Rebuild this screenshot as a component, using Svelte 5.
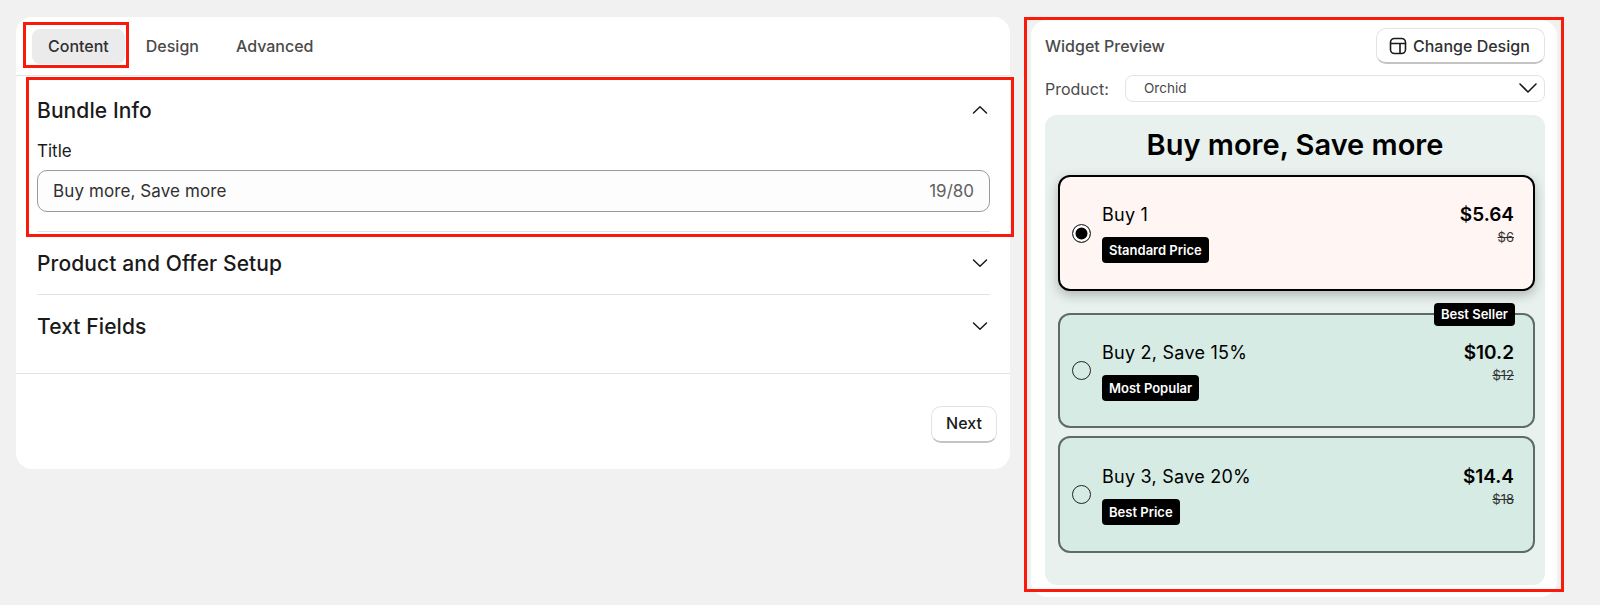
<script>
	const tabs = ["Content", "Design", "Advanced"];
	const offers = [
		{ title: "Buy 1", tag: "Standard Price", price: "$5.64", was: "$6", selected: true },
		{ title: "Buy 2, Save 15%", tag: "Most Popular", price: "$10.2", was: "$12", ribbon: "Best Seller" },
		{ title: "Buy 3, Save 20%", tag: "Best Price", price: "$14.4", was: "$18" },
	];
</script>

{#snippet chevron(up)}
	<svg class="chevron" class:up width="16" height="16" viewBox="0 0 16 16" fill="none">
		<path d="M1.5 5 8 11.2 14.5 5" stroke="#1a1a1a" stroke-width="1.5" stroke-linecap="round" stroke-linejoin="round" />
	</svg>
{/snippet}

<div class="page">
	<section class="editor">
		<nav class="tabs">
			{#each tabs as tab, i}
				<button class="tab" class:active={i === 0}>{tab}</button>
			{/each}
		</nav>
		<div class="accordion">
			<div class="group open">
				<div class="group-head">
					<h2>Bundle Info</h2>
					{@render chevron(true)}
				</div>
				<label class="field-label" for="title">Title</label>
				<div class="input">
					<input id="title" value="Buy more, Save more" />
					<span class="count">19/80</span>
				</div>
			</div>
			<div class="group">
				<div class="group-head">
					<h2>Product and Offer Setup</h2>
					{@render chevron(false)}
				</div>
			</div>
			<div class="group last">
				<div class="group-head">
					<h2>Text Fields</h2>
					{@render chevron(false)}
				</div>
			</div>
		</div>
		<footer class="actions">
			<button class="next">Next</button>
		</footer>
	</section>

	<aside class="preview">
		<div class="preview-head">
			<span class="heading">Widget Preview</span>
			<button class="change">
				<svg width="18" height="18" viewBox="0 0 18 18" fill="none" stroke="#1a1a1a" stroke-width="1.6">
					<rect x="1.5" y="1.5" width="15" height="15" rx="4" />
					<path d="M1.5 6.5h15M11 6.5v10" />
				</svg>
				Change Design
			</button>
		</div>
		<div class="product-row">
			<span class="product-label">Product:</span>
			<div class="select">
				<span>Orchid</span>
				<svg width="20" height="14" viewBox="0 0 20 14" fill="none">
					<path d="M2 3l8 8 8-8" stroke="#1a1a1a" stroke-width="1.6" stroke-linecap="round" stroke-linejoin="round" />
				</svg>
			</div>
		</div>
		<div class="widget">
			<h1>Buy more, Save more</h1>
			{#each offers as o}
				<div class="offer" class:selected={o.selected}>
					{#if o.ribbon}<span class="ribbon">{o.ribbon}</span>{/if}
					<span class="radio"></span>
					<div class="offer-main">
						<div class="offer-title">{o.title}</div>
						<span class="tag">{o.tag}</span>
					</div>
					<div class="offer-price">
						<div class="price">{o.price}</div>
						<s class="was">{o.was}</s>
					</div>
				</div>
			{/each}
		</div>
	</aside>

	<!-- annotation boxes drawn over the screenshot -->
	<div class="mark mark-tab"></div>
	<div class="mark mark-info"></div>
	<div class="mark mark-preview"></div>
</div>

<style>
	:global(body) {
		background: #f1f1f1;
		overflow: hidden;
	}
	.page {
		position: relative;
		display: flex;
		align-items: flex-start;
		height: 605px;
		box-sizing: border-box;
		padding: 17px 0 0 16px;
		font-family: Inter, "Liberation Sans", sans-serif;
		color: #303030;
	}
	button {
		font-family: inherit;
		cursor: pointer;
	}

	.editor {
		width: 994px;
		height: 452px;
		background: #fff;
		border-radius: 16px;
		display: flex;
		flex-direction: column;
	}
	.tabs {
		display: flex;
		gap: 5px;
		height: 59px;
		box-sizing: border-box;
		padding: 12px 0 0 16px;
		border-bottom: 1px solid #e3e3e3;
	}
	.tab {
		height: 35px;
		padding: 0 16px 2px;
		border: 0;
		border-radius: 8px;
		background: transparent;
		color: #4a4a4a;
		font-size: 16px;
		font-weight: 500;
	}
	.tab.active {
		background: #ebebeb;
		color: #303030;
	}
	.accordion {
		padding: 0 20px 0 21px;
		height: 298px;
		box-sizing: border-box;
		border-bottom: 1px solid #e3e3e3;
	}
	.group {
		border-bottom: 1px solid #e3e3e3;
		height: 63px;
		box-sizing: border-box;
	}
	.group.open {
		height: 156px;
	}
	.group.last {
		border-bottom: 0;
	}
	.group-head {
		display: flex;
		justify-content: space-between;
		align-items: center;
		height: 63px;
	}
	.group.open .group-head {
		height: 69px;
	}
	.chevron {
		margin: 0 2px 2px 0;
	}
	.chevron.up {
		transform: rotate(180deg);
	}
	h2 {
		margin: 0;
		font-size: 21px;
		letter-spacing: 0.1px;
		font-weight: 500;
		color: #1a1a1a;
	}
	.field-label {
		display: block;
		font-size: 17px;
		line-height: 20px;
		color: #1a1a1a;
		margin-top: -4px;
	}
	.input {
		display: flex;
		align-items: center;
		margin-top: 9px;
		height: 42px;
		box-sizing: border-box;
		padding: 0 15px;
		border: 1px solid #9a9a9a;
		border-radius: 10px;
		background: #fdfdfd;
	}
	.input input {
		flex: 1;
		border: 0;
		outline: 0;
		background: transparent;
		font: inherit;
		font-size: 17px;
		letter-spacing: 0.1px;
		color: #303030;
		padding: 0;
	}
	.count {
		font-size: 17px;
		color: #616161;
	}
	.actions {
		display: flex;
		justify-content: flex-end;
		padding: 32px 13px 0 0;
	}
	.next {
		width: 66px;
		height: 37px;
		padding-bottom: 3px;
		background: #fff;
		border: 1px solid #e3e3e3;
		border-bottom: 2px solid #c4c4c4;
		border-radius: 10px;
		font-size: 16px;
		font-weight: 500;
		color: #1a1a1a;
	}

	.preview {
		margin: 3px 0 0 21px;
		width: 526px;
		height: 577px;
		box-sizing: border-box;
		background: #fff;
		border-radius: 16px;
		padding: 8px 12px 0 14px;
	}
	.preview-head {
		display: flex;
		justify-content: space-between;
		align-items: center;
		height: 36px;
	}
	.heading {
		font-size: 16px;
		font-weight: 500;
		color: #4a4a4a;
	}
	.product-label {
		font-size: 16px;
		color: #4a4a4a;
	}
	.change {
		display: flex;
		align-items: center;
		gap: 6px;
		width: 169px;
		height: 36px;
		padding: 0 0 0 12px;
		background: #fff;
		border: 1px solid #e3e3e3;
		border-bottom: 2px solid #c4c4c4;
		border-radius: 10px;
		font-size: 16px;
		font-weight: 500;
		color: #303030;
	}
	.product-row {
		display: flex;
		align-items: center;
		justify-content: space-between;
		margin-top: 11px;
	}
	.select {
		width: 420px;
		height: 27px;
		box-sizing: border-box;
		display: flex;
		align-items: center;
		justify-content: space-between;
		padding: 0 6px 1px 18px;
		border: 1px solid #e3e3e3;
		border-radius: 8px;
		font-size: 13.5px;
		color: #4a4a4a;
	}
	.widget {
		margin-top: 13px;
		height: 470px;
		box-sizing: border-box;
		background: #e8f1ee;
		border-radius: 12px;
		padding: 13px 10px 0 13px;
	}
	h1 {
		margin: 0 3px 14px 0;
		text-align: center;
		font-size: 29px;
		line-height: 33px;
		font-weight: 600;
		color: #000;
	}
	.offer {
		position: relative;
		display: flex;
		align-items: center;
		gap: 11px;
		height: 115px;
		box-sizing: border-box;
		padding: 0 19px 0 12px;
		margin-bottom: 8px;
		border: 2px solid #5f6b68;
		border-radius: 12px;
		background: #d5ebe4;
		color: #000;
	}
	.offer:last-child {
		height: 117px;
	}
	.offer.selected {
		height: 116px;
		border-color: #000;
		background: #fff5f3;
		margin-bottom: 22px;
		box-shadow: 0 4px 12px rgba(0, 0, 0, 0.25);
	}
	.radio {
		width: 19px;
		height: 19px;
		box-sizing: border-box;
		border: 1px solid #222;
		border-radius: 50%;
		flex: none;
	}
	.selected .radio {
		border-color: #333;
		background: #000;
		box-shadow: inset 0 0 0 2.5px #fff;
	}
	.offer-main {
		flex: 1;
	}
	.offer-title {
		font-size: 18px;
		letter-spacing: 0.25px;
		line-height: 24px;
		margin-bottom: 10px;
	}
	.tag {
		display: block;
		width: fit-content;
		background: #000;
		color: #fff;
		font-size: 13px;
		font-weight: 600;
		line-height: 26px;
		padding: 0 7px;
		border-radius: 4px;
	}
	.offer-price {
		height: 60px;
		text-align: right;
	}
	.price {
		font-size: 19px;
		line-height: 24px;
		font-weight: 600;
	}
	.was {
		display: block;
		font-size: 13px;
		line-height: 20px;
		color: #333;
	}
	.ribbon {
		position: absolute;
		top: -12px;
		right: 18px;
		background: #000;
		color: #fff;
		font-size: 13px;
		font-weight: 600;
		line-height: 23px;
		padding: 0 7px;
		border-radius: 4px;
	}

	.mark {
		position: absolute;
		box-sizing: border-box;
		border: 3px solid #f91a0c;
		pointer-events: none;
	}
	.mark-tab {
		left: 23px;
		top: 22px;
		width: 106px;
		height: 46px;
	}
	.mark-info {
		left: 26px;
		top: 77px;
		width: 988px;
		height: 160px;
	}
	.mark-preview {
		left: 1024px;
		top: 17px;
		width: 540px;
		height: 575px;
	}
</style>
